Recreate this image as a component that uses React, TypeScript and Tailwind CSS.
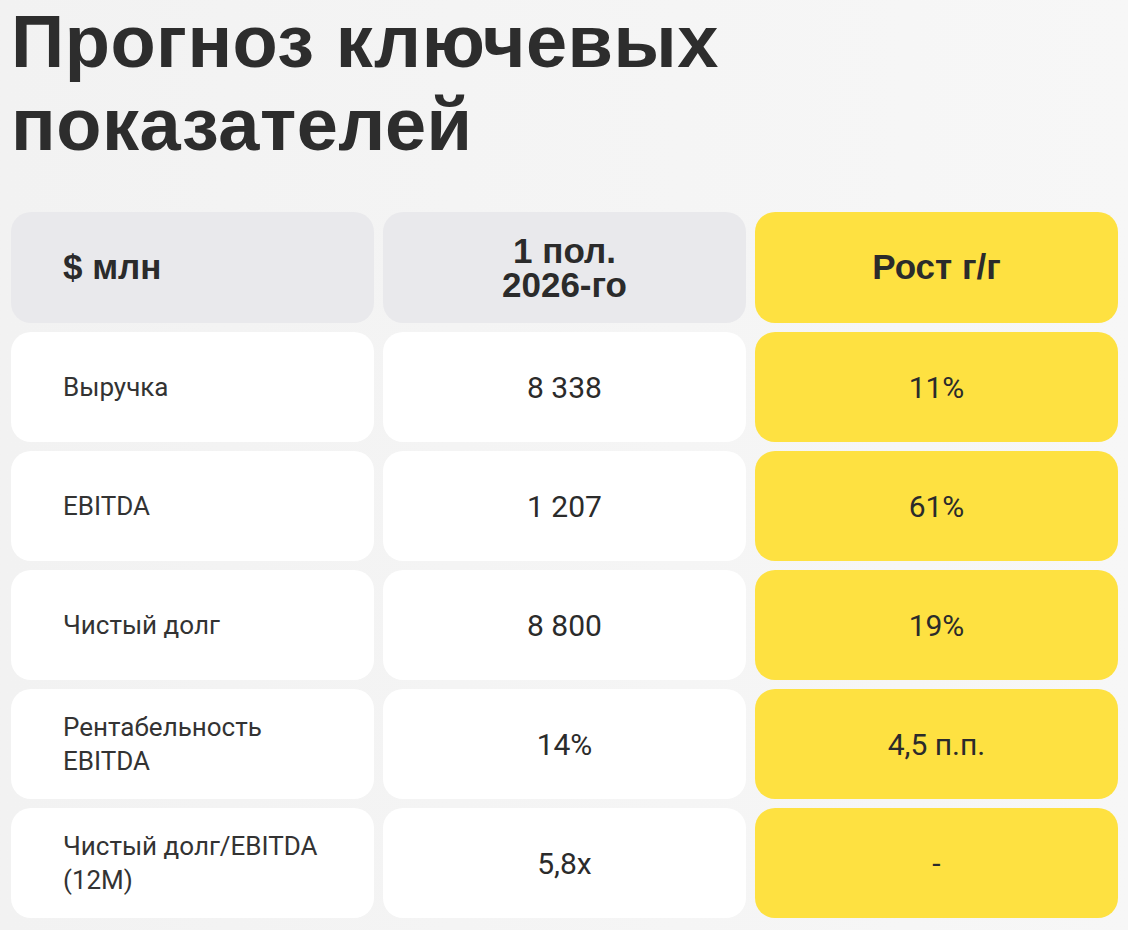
import React from "react";

type Row = {
  label: string[];
  value: string;
  growth: string;
};

const rows: Row[] = [
  { label: ["Выручка"], value: "8 338", growth: "11%" },
  { label: ["EBITDA"], value: "1 207", growth: "61%" },
  { label: ["Чистый долг"], value: "8 800", growth: "19%" },
  { label: ["Рентабельность", "EBITDA"], value: "14%", growth: "4,5 п.п." },
  { label: ["Чистый долг/EBITDA", "(12M)"], value: "5,8x", growth: "-" },
];

const App = () => {
  return (
    <div className="min-h-[930px] w-[1128px] bg-gradient-to-r from-[#f2f2f2] to-[#f7f7f7] pl-[11px] pr-[10px] pb-[11px] text-[#2b2b2b]">
      {/* Title */}
      <h1 className="font-['Liberation_Sans',Arial,sans-serif] text-[74px] font-bold leading-[83px] tracking-[0.5px] text-[#2d2d2d]">
        Прогноз ключевых
        <br />
        показателей
      </h1>

      {/* Table */}
      <div className="mt-[46px] grid grid-cols-3 gap-[9px]">
        {/* Header */}
        <div className="flex h-[111px] items-center rounded-[20px] bg-[#e9e9ec] pl-[52px] font-['Liberation_Sans',Arial,sans-serif] text-[35px] font-bold">
          $ млн
        </div>
        <div className="flex h-[111px] flex-col items-center justify-center rounded-[20px] bg-[#e9e9ec] text-center font-['Liberation_Sans',Arial,sans-serif] text-[35px] font-bold leading-[34px]">
          <span>1 пол.</span>
          <span>2026-го</span>
        </div>
        <div className="flex h-[111px] items-center justify-center rounded-[20px] bg-[#fee141] font-['Liberation_Sans',Arial,sans-serif] text-[35px] font-bold">
          Рост г/г
        </div>

        {/* Body rows */}
        {rows.map((row, i) => (
          <React.Fragment key={i}>
            <div className="flex h-[110px] flex-col justify-center rounded-[20px] bg-white pl-[52px] font-['Roboto',sans-serif] text-[26px] leading-[34px] text-[#333333]">
              {row.label.map((line, j) => (
                <span key={j}>{line}</span>
              ))}
            </div>
            <div className="flex h-[110px] items-center justify-center rounded-[20px] bg-white font-['Roboto',sans-serif] text-[30px] text-[#2b2b2b]">
              {row.value}
            </div>
            <div className="flex h-[110px] items-center justify-center rounded-[20px] bg-[#fee141] font-['Roboto',sans-serif] text-[30px] text-[#2b2b2b]">
              {row.growth}
            </div>
          </React.Fragment>
        ))}
      </div>
    </div>
  );
};

export default App;
